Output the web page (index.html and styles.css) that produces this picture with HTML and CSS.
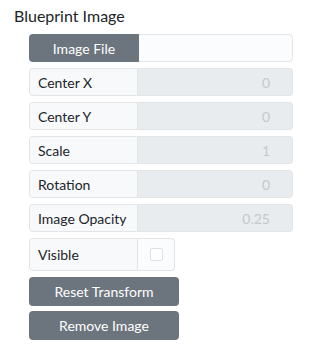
FILE: index.html
```html
<!DOCTYPE html>
<html lang="en">
<head>
<meta charset="UTF-8">
<meta name="viewport" content="width=device-width, initial-scale=1.0">
<title>Blueprint Image</title>
<link rel="stylesheet" href="styles.css">
</head>
<body>
<div class="panel">
  <div class="panel-title">Blueprint Image</div>
  <div class="panel-body">
    <div class="input-row">
      <button class="btn file-btn">Image File</button>
      <div class="file-name"></div>
    </div>
    <div class="input-row">
      <span class="row-label">Center X</span>
      <input class="row-input" type="text" value="0" disabled>
    </div>
    <div class="input-row">
      <span class="row-label">Center Y</span>
      <input class="row-input" type="text" value="0" disabled>
    </div>
    <div class="input-row">
      <span class="row-label">Scale</span>
      <input class="row-input" type="text" value="1" disabled>
    </div>
    <div class="input-row">
      <span class="row-label">Rotation</span>
      <input class="row-input" type="text" value="0" disabled>
    </div>
    <div class="input-row">
      <span class="row-label">Image Opacity</span>
      <input class="row-input" type="text" value="0.25" disabled>
    </div>
    <div class="input-row check-row">
      <span class="row-label">Visible</span>
      <span class="check-cell"><span class="check-box"></span></span>
    </div>
    <button class="btn action-btn">Reset Transform</button>
    <button class="btn action-btn">Remove Image</button>
  </div>
</div>
</body>
</html>
```

FILE: styles.css
```css
/* styles.css */
body {
  margin: 0;
  background-color: #fff;
  color: #212529;
  font-family: 'Lato', sans-serif;
}

.panel {
  padding: 6px 14px;
}

.panel-title {
  font-size: 16px;
  line-height: 20px;
  margin-bottom: 8px;
}

.panel-body {
  margin-left: 15px;
  width: 264px;
  display: flex;
  flex-direction: column;
  align-items: flex-start;
}

.input-row {
  display: flex;
  width: 100%;
  height: 28px;
  margin-bottom: 6px;
  box-sizing: border-box;
}

.btn {
  font-family: inherit;
  font-size: 14px;
  color: #fff;
  background-color: #6c757d;
  border: none;
  border-radius: 4px;
  cursor: pointer;
}

.file-btn {
  width: 110px;
  height: 28px;
  border-radius: 4px 0 0 4px;
}

.file-name {
  flex: 1;
  border: 1px solid #e4e7ea;
  border-left: none;
  border-radius: 0 4px 4px 0;
  background-color: #fbfcfd;
}

.row-label {
  width: 109px;
  box-sizing: border-box;
  padding-left: 8px;
  display: flex;
  align-items: center;
  font-size: 14px;
  background-color: #f8f9fa;
  border: 1px solid #e2e5e8;
  border-radius: 4px 0 0 4px;
}

.row-input {
  flex: 1;
  min-width: 0;
  box-sizing: border-box;
  font-family: inherit;
  font-size: 14px;
  text-align: right;
  padding: 0 22px 0 8px;
  color: #c4c8cc;
  background-color: #e9ecef;
  border: 1px solid #e2e5e8;
  border-left: none;
  border-radius: 0 4px 4px 0;
}

.check-row {
  width: 146px;
  height: 33px;
}

.check-cell {
  width: 37px;
  display: flex;
  justify-content: center;
  padding-top: 9px;
  box-sizing: border-box;
  border: 1px solid #e2e5e8;
  border-left: none;
  border-radius: 0 4px 4px 0;
  background-color: #fbfcfd;
}

.check-box {
  width: 11px;
  height: 11px;
  border: 1px solid #dfe2e5;
  border-radius: 2px;
  background-color: #fff;
}

.action-btn {
  width: 150px;
  height: 29px;
  margin-bottom: 5px;
}
```
